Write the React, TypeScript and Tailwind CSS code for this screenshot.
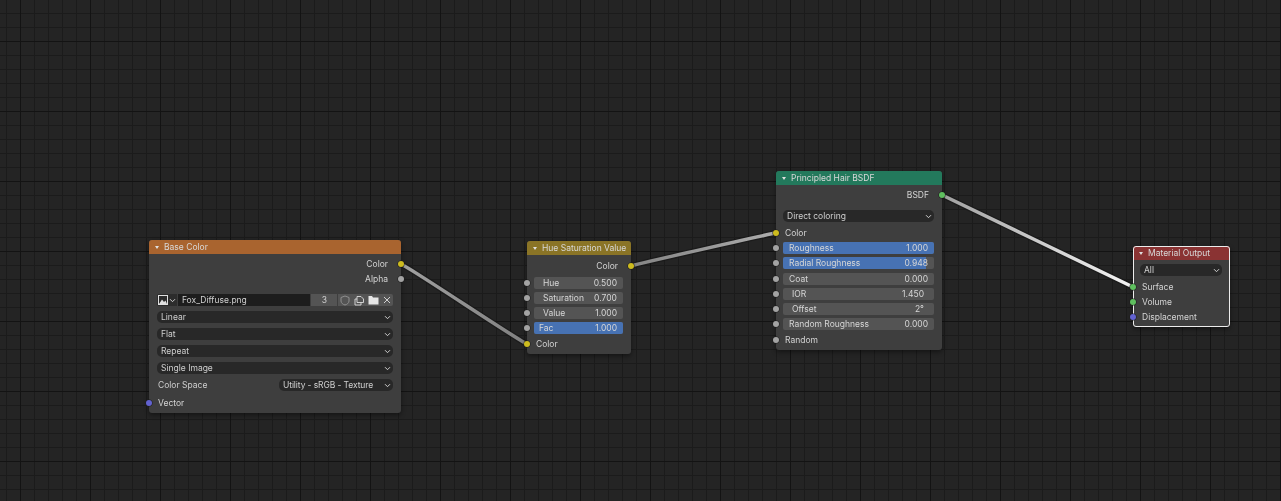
import type { ReactNode } from "react";

const font = "font-['Inter','Liberation_Sans',sans-serif]";

const socketColors = {
  yellow: "bg-[#cdbb1f]",
  grey: "bg-[#a3a3a3]",
  green: "bg-[#5fbf5f]",
  blue: "bg-[#6262d0]",
};

type SocketColor = keyof typeof socketColors;

function Socket({ color, side }: { color: SocketColor; side: "left" | "right" }) {
  return (
    <span
      className={`absolute top-1/2 size-[6px] -translate-y-1/2 rounded-full shadow-[0_0_0_0.5px_#1c1c1c] ${socketColors[color]} ${
        side === "left" ? "left-[-3px]" : "right-[-3px]"
      }`}
    />
  );
}

function Node({
  title,
  header,
  className,
  selected,
  children,
}: {
  title: string;
  header: string;
  className: string;
  selected?: boolean;
  children: ReactNode;
}) {
  return (
    <div
      className={`absolute flex flex-col rounded-[3px] bg-[#3e3e3e] shadow-[0_2px_5px_rgba(0,0,0,0.45)] ${className} ${
        selected ? "outline outline-1 -outline-offset-1 outline-[#ececec]" : ""
      }`}
    >
      <div className={`flex h-[14px] shrink-0 items-center whitespace-nowrap rounded-t-[3px] pl-[6px] text-[#d8d8d8] ${header}`}>
        <span className="mr-[5px] h-0 w-0 border-x-[2.5px] border-t-[3.5px] border-x-transparent border-t-[#e0e0e0]" />
        {title}
      </div>
      {children}
    </div>
  );
}

function Output({ label, color, className }: { label: string; color: SocketColor; className: string }) {
  return (
    <div className={`relative flex h-[15px] items-center justify-end pr-[13px] pt-[2px] text-[#d4d4d4] ${className}`}>
      {label}
      <Socket color={color} side="right" />
    </div>
  );
}

function Input({ label, color, className }: { label: string; color: SocketColor; className: string }) {
  return (
    <div className={`relative flex h-[15px] items-center pl-[9px] pt-[2px] text-[#d4d4d4] ${className}`}>
      {label}
      <Socket color={color} side="left" />
    </div>
  );
}

function Chevron() {
  return (
    <svg width="7" height="5" viewBox="0 0 7 5" className="shrink-0">
      <path d="M1 1.2 3.5 3.7 6 1.2" fill="none" stroke="#d0d0d0" strokeWidth="1" />
    </svg>
  );
}

function Dropdown({ label, className }: { label: string; className: string }) {
  return (
    <div className={`flex h-[12px] items-center justify-between whitespace-nowrap rounded-[5px] bg-[#282828] pl-[4px] pr-[2px] text-[#cfcfcf] ${className}`}>
      {label}
      <Chevron />
    </div>
  );
}

function Field({
  label,
  value,
  color = "grey",
  fill,
  indent = "pl-[6px]",
  valuePad = "pr-[6px]",
  className,
}: {
  label: string;
  value: string;
  color?: SocketColor;
  fill?: number;
  indent?: string;
  valuePad?: string;
  className: string;
}) {
  return (
    <div className={`relative flex h-[15px] items-center ${className}`}>
      <Socket color={color} side="left" />
      <div className="relative ml-[7px] mr-[8px] flex h-[12px] flex-1 items-center justify-between overflow-hidden rounded-[2px] bg-[#545454] text-[#d6d6d6]">
        {fill !== undefined && (
          <div className="absolute inset-y-0 left-0 bg-[#4772b3]" style={{ width: `${fill * 100}%` }} />
        )}
        <span className={`relative pt-[2px] ${indent}`}>{label}</span>
        <span className={`relative pt-[2px] ${valuePad}`}>{value}</span>
      </div>
    </div>
  );
}

function Wires() {
  return (
    <svg className="absolute inset-0 blur-[0.5px]" width="1281" height="501" viewBox="0 0 1281 501" fill="none">
      <defs>
        <linearGradient id="w1" gradientUnits="userSpaceOnUse" x1="401" y1="264" x2="527" y2="344">
          <stop offset="0" stopColor="#a0a0a0" />
          <stop offset="1" stopColor="#808080" />
        </linearGradient>
        <linearGradient id="w2" gradientUnits="userSpaceOnUse" x1="631" y1="266" x2="775" y2="233">
          <stop offset="0" stopColor="#848484" />
          <stop offset="1" stopColor="#acacac" />
        </linearGradient>
        <linearGradient id="w3" gradientUnits="userSpaceOnUse" x1="942" y1="195" x2="1133" y2="287">
          <stop offset="0" stopColor="#a0a0a0" />
          <stop offset="1" stopColor="#f6f6f6" />
        </linearGradient>
      </defs>
      <path d="M401 264C412 269 516 339 527 344" stroke="#161616" strokeWidth="6" strokeOpacity="0.6" />
      <path d="M631 266C645 262 761 236 775 233" stroke="#161616" strokeWidth="6" strokeOpacity="0.6" />
      <path d="M942 195C956 202 1119 280 1133 287" stroke="#161616" strokeWidth="6" strokeOpacity="0.6" />
      <path d="M401 264C412 269 516 339 527 344" stroke="url(#w1)" strokeWidth="3.5" />
      <path d="M631 266C645 262 761 236 775 233" stroke="url(#w2)" strokeWidth="3.5" />
      <path d="M942 195C956 202 1119 280 1133 287" stroke="url(#w3)" strokeWidth="3.5" />
    </svg>
  );
}

function ImageRow() {
  return (
    <div className="ml-[8px] mr-[8px] mt-[8px] flex h-[12px] items-center text-[#cfcfcf]">
      <div className="flex h-[12px] w-[20px] items-center gap-[1px] rounded-l-[2px] bg-[#2c2c2c] pl-[1px]">
        <svg width="10" height="10" viewBox="0 0 10 10" className="shrink-0">
          <rect x="0.5" y="0.5" width="9" height="9" fill="none" stroke="#e0e0e0" />
          <path d="M1 9 4 4.5 6 7 7.5 5.5 9 9Z" fill="#e0e0e0" />
        </svg>
        <Chevron />
      </div>
      <div className="ml-px flex h-[12px] w-[133px] items-center bg-[#1d1d1d] pl-[4px]">Fox_Diffuse.png</div>
      <div className="ml-px flex h-[12px] w-[26px] items-center justify-center bg-[#545454]">3</div>
      <div className="ml-px flex h-[12px] w-[14px] items-center justify-center bg-[#545454]">
        <svg width="10" height="11" viewBox="0 0 10 11">
          <path d="M5 1 9 2.5V6C9 8 7 9.5 5 10 3 9.5 1 8 1 6V2.5Z" fill="none" stroke="#8f8f8f" />
        </svg>
      </div>
      <div className="flex h-[12px] w-[14px] items-center justify-center bg-[#545454]">
        <svg width="11" height="11" viewBox="0 0 11 11">
          <path d="M1 4H3V1.5H7L9.5 4V7.5H7V10H1Z M3 4V7.5H7" fill="none" stroke="#dcdcdc" strokeWidth="0.9" />
        </svg>
      </div>
      <div className="flex h-[12px] w-[14px] items-center justify-center bg-[#545454]">
        <svg width="11" height="10" viewBox="0 0 11 10">
          <path d="M0.5 1H4L5 2.5H10.5V9.5H0.5Z" fill="#e6e6e6" />
        </svg>
      </div>
      <div className="flex h-[12px] w-[13px] items-center justify-center rounded-r-[2px] bg-[#545454]">
        <svg width="8" height="8" viewBox="0 0 8 8">
          <path d="M1 1 7 7M7 1 1 7" stroke="#d0d0d0" />
        </svg>
      </div>
    </div>
  );
}

export default function App() {
  return (
    <div
      className={`relative h-[501px] w-[1281px] overflow-hidden bg-[#242424] text-[8.5px] leading-none blur-[0.35px] ${font} bg-[linear-gradient(#131313_1px,transparent_1px),linear-gradient(90deg,#131313_1px,transparent_1px),linear-gradient(#1b1b1b_1px,transparent_1px),linear-gradient(90deg,#1b1b1b_1px,transparent_1px)] bg-[size:70px_70px,70px_70px,14px_14px,14px_14px] bg-[position:0_41px,20px_0,0_13px,6px_0]`}
    >
      <Wires />

      <Node title="Base Color" header="bg-[#a9642f]" className="left-[149px] top-[240px] h-[173px] w-[252px]">
        <Output label="Color" color="yellow" className="mt-[2px]" />
        <Output label="Alpha" color="grey" className="" />
        <ImageRow />
        <Dropdown label="Linear" className="ml-[8px] mr-[8px] mt-[5px]" />
        <Dropdown label="Flat" className="ml-[8px] mr-[8px] mt-[5px]" />
        <Dropdown label="Repeat" className="ml-[8px] mr-[8px] mt-[5px]" />
        <Dropdown label="Single Image" className="ml-[8px] mr-[8px] mt-[5px]" />
        <div className="ml-[9px] mr-[8px] mt-[5px] flex h-[12px] items-center justify-between text-[#cfcfcf]">
          Color Space
          <Dropdown label="Utility - sRGB - Texture" className="w-[114px] tracking-[-0.1px]" />
        </div>
        <Input label="Vector" color="blue" className="mt-[4px]" />
      </Node>

      <Node title="Hue Saturation Value" header="bg-[#8a7426]" className="left-[527px] top-[241px] h-[113px] w-[104px]">
        <Output label="Color" color="yellow" className="mt-[3px]" />
        <Field label="Hue" value="0.500" indent="pl-[9px]" className="mt-[2px]" />
        <Field label="Saturation" value="0.700" indent="pl-[9px]" className="" />
        <Field label="Value" value="1.000" indent="pl-[9px]" className="" />
        <Field label="Fac" value="1.000" fill={1} indent="pl-[5px]" className="" />
        <Input label="Color" color="yellow" className="mt-px" />
      </Node>

      <Node title="Principled Hair BSDF" header="bg-[#23795c]" className="left-[776px] top-[171px] h-[179px] w-[166px]">
        <Output label="BSDF" color="green" className="mt-[2px]" />
        <Dropdown label="Direct coloring" className="ml-[7px] mr-[8px] mt-[8px]" />
        <Input label="Color" color="yellow" className="mt-[3px]" />
        <Field label="Roughness" value="1.000" fill={1} className="" />
        <Field label="Radial Roughness" value="0.948" fill={0.948} className="" />
        <Field label="Coat" value="0.000" className="mt-px" />
        <Field label="IOR" value="1.450" indent="pl-[9px]" valuePad="pr-[10px]" className="" />
        <Field label="Offset" value="2°" indent="pl-[9px]" valuePad="pr-[10px]" className="" />
        <Field label="Random Roughness" value="0.000" className="" />
        <Input label="Random" color="grey" className="mt-px" />
      </Node>

      <Node title="Material Output" header="bg-[#8a3333]" className="left-[1133px] top-[246px] h-[81px] w-[97px]" selected>
        <Dropdown label="All" className="ml-[7px] mr-[8px] mt-[4px]" />
        <Input label="Surface" color="green" className="mt-[3px]" />
        <Input label="Volume" color="green" className="" />
        <Input label="Displacement" color="blue" className="" />
      </Node>
    </div>
  );
}
